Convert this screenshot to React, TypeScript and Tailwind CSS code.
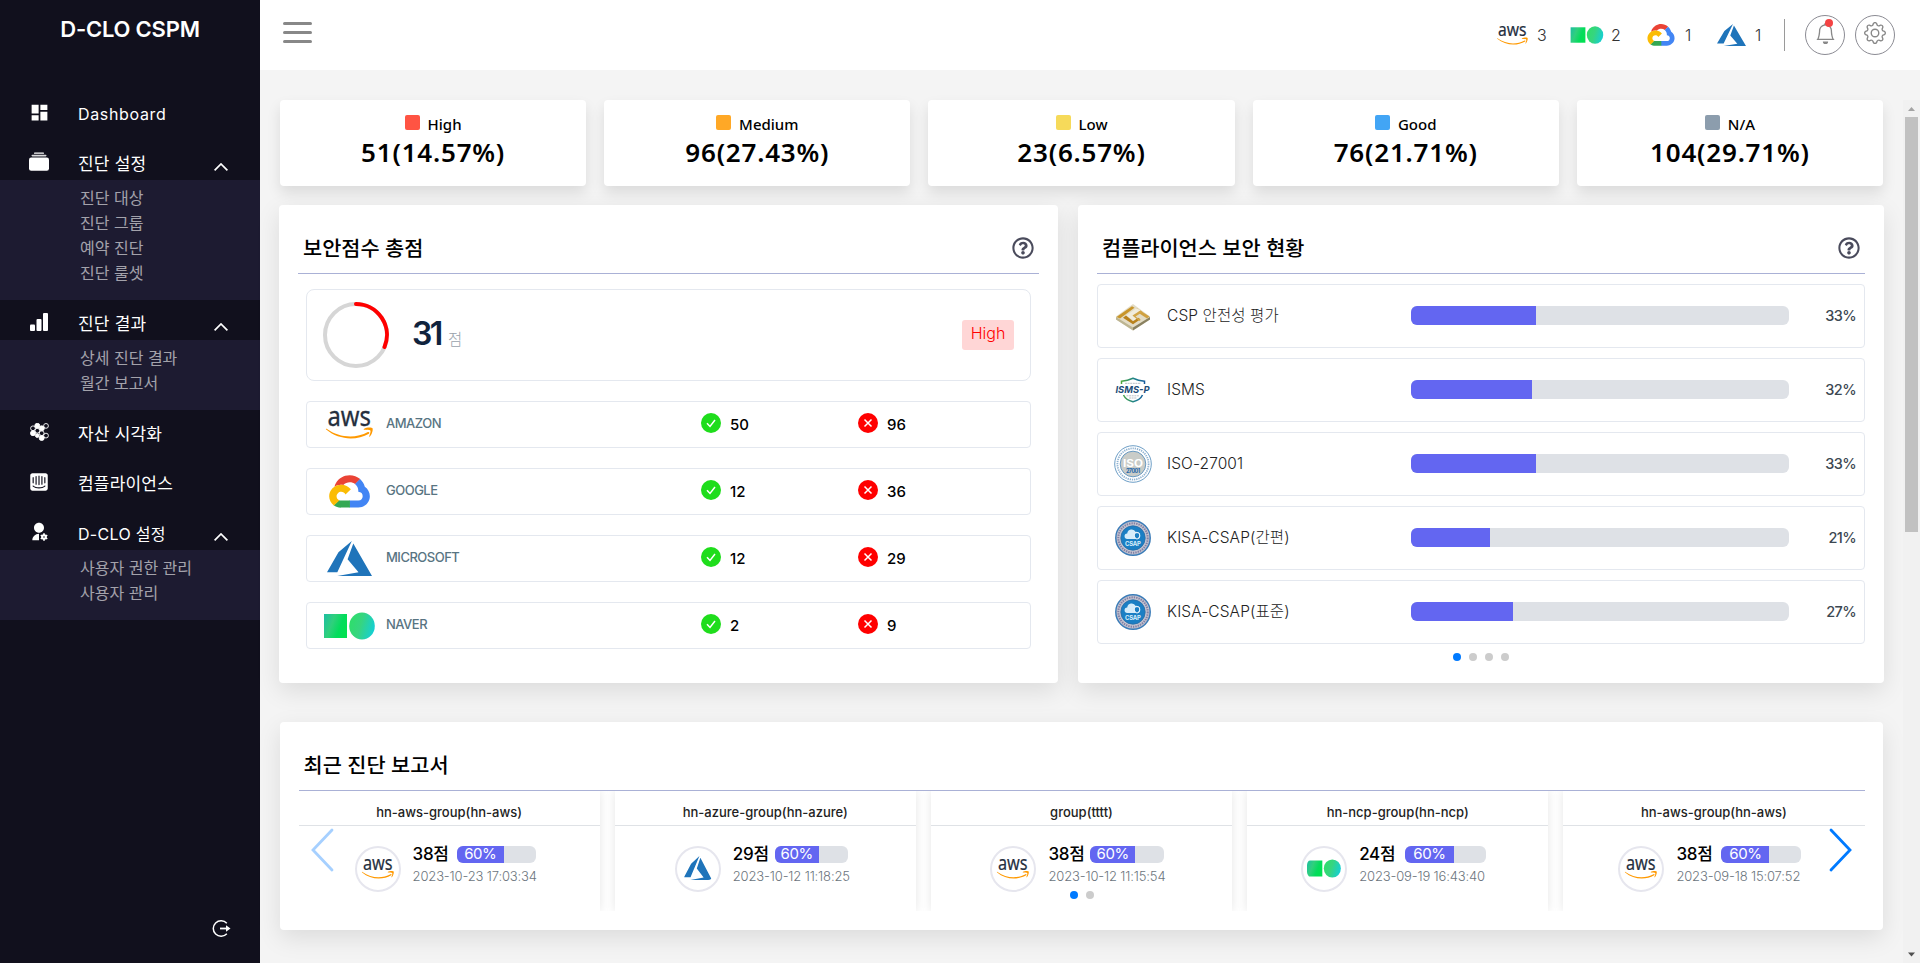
import React from "react";
import { MdDashboard } from "react-icons/md";
import { FaIntercom, FaRegQuestionCircle } from "react-icons/fa";
import { RiUserSettingsFill } from "react-icons/ri";
import { BsBell, BsGear } from "react-icons/bs";

type LogoProps = { className?: string };

function AwsLogo({ className }: LogoProps) {
  return (
    <svg viewBox="0 0 47 29" className={`overflow-visible ${className}`} aria-label="aws">
      <text x="1.500" y="15.800" fontFamily="'Noto Sans', 'Open Sans', sans-serif" fontWeight="400" fontSize="28" textLength="43.500" lengthAdjust="spacingAndGlyphs" fill="#252f3e" stroke="#252f3e" strokeWidth="0.300">
        aws
      </text>
      <path d="M0.600 18.800c13 9.500 29.500 9.800 41.300 3.300 1.200-.6 2 .8 1 1.600C30.500 30.900 12.500 30.100.2 19.600c-.7-.6-.2-1.200.4-.8z" fill="#ff9900" />
      <path d="M37.800 18.900c2.600-1.600 7.900-1.700 8.700-.6.7 1.200-.3 6-2.600 8.300-.5.4-.9.100-.7-.4.8-2 1.700-4.900 1.200-5.700-.6-.8-4-.6-6.100-.8-.6-.1-.8-.5-.5-.8z" fill="#ff9900" />
    </svg>
  );
}

function GoogleCloudLogo({ className }: LogoProps) {
  return (
    <svg viewBox="5 14 118 95" className={className} aria-label="google cloud">
      <path fill="#ea4335" d="M80.6 40.3h.4l-.2-.2 14-14v-.3c-11.800-10.400-28.100-14-43.200-9.500C36.500 20.800 24.900 32.800 20.700 48c.2-.1.5-.2.8-.2 5.200-3.400 11.400-5.400 17.900-5.400 2.200 0 4.300.2 6.400.6.1-.1.2-.1.3-.1 9-9.900 24.200-11.100 34.600-2.600h-.1z" />
      <path fill="#4285f4" d="M108.100 47.800c-2.300-8.500-7.100-16.200-13.800-22.100L80 39.900c6 4.900 9.500 12.300 9.300 20v2.500c16.900 0 16.900 25.200 0 25.200H63.900v20h-.1l.1.2h25.400c14.600.1 27.500-9.300 31.800-23.100 4.300-13.800-1-28.800-13-36.900z" />
      <path fill="#34a853" d="M39 107.900h26.300V87.700H39c-1.900 0-3.700-.4-5.400-1.100l-15.200 14.600v.2c6 4.300 13.200 6.600 20.700 6.600z" />
      <path fill="#fbbc05" d="M40.200 41.900c-14.900.1-28.100 9.300-32.900 22.800-4.800 13.600 0 28.500 11.800 37.300l15.600-14.900c-8.600-3.700-10.600-14.500-4-20.800 6.600-6.400 17.800-4.400 21.700 3.800L68 55.200C61.400 46.900 51.100 42 40.200 42.100z" />
    </svg>
  );
}

function AzureLogo({ className }: LogoProps) {
  return (
    <svg viewBox="0 2.700 24 18.600" className={className} preserveAspectRatio="none" aria-label="azure">
      <path fill="#1f74ba" d="M5.483 21.300H24L14.025 4.013l-3.038 8.347 5.836 6.938L5.483 21.300zM13.230 2.700L6.105 8.677 0 19.253h5.505v.014L13.230 2.700z" />
    </svg>
  );
}

function NaverLogo({ className }: LogoProps) {
  return (
    <svg viewBox="0 0 51 28" className={className} aria-label="naver cloud">
      <defs>
        <linearGradient id="ncpSquare" x1="0" y1="0.1" x2="1" y2="0.5">
          <stop offset="0" stopColor="#1fbfa0" />
          <stop offset="0.4" stopColor="#2fd07c" />
          <stop offset="0.75" stopColor="#03dc5c" />
          <stop offset="1" stopColor="#02e052" />
        </linearGradient>
        <linearGradient id="ncpCircle" x1="0" y1="0.3" x2="1" y2="0.600">
          <stop offset="0" stopColor="#2ede69" />
          <stop offset="0.450" stopColor="#36d580" />
          <stop offset="1" stopColor="#14cfd6" />
        </linearGradient>
      </defs>
      <rect x="0" y="2" width="23" height="24" fill="url(#ncpSquare)" />
      <ellipse cx="38" cy="14" rx="12.800" ry="13.600" fill="url(#ncpCircle)" />
    </svg>
  );
}

function CspBadge() {
  return (
    <svg viewBox="0 0 36 28" className="mt-px h-[28px] w-[36px]">
      <path d="M1 13.500 18 1l17 12.500v3L18 27.500 1 16.500z" fill="#e3dcc6" />
      <path d="M1 14 18 24.500v3L1 16.500z" fill="#bdb592" />
      <path d="M18 24.500 35 14v2.500L18 27.500z" fill="#8a8160" />
      <path d="M1.500 14 17 3.200l2.500 1.600L5 15.600z" fill="#c8952a" />
      <path d="M34.500 13.500 22 5.500l-2.500 1.800L32 15.500z" fill="#cfa040" />
      <path d="M21 5.500 11 12.500l8 5.200 2.800-2-4.300-3 8-5.200-1.800-1.200" fill="#f1ecdc" />
      <path d="M11 12.500 8 14.700l10 6.500 7.500-5-2.300-1.500-5.200 3.500z" fill="#b9821c" />
      <path d="M17.500 12.500l8-5 2 1.400-7 4.600 5.200 3.400-1.500 1z" fill="#d3a545" />
    </svg>
  );
}

function IsmsBadge() {
  return (
    <svg viewBox="0 0 36 26" className="h-[26px] w-[36px] overflow-visible">
      <defs>
        <linearGradient id="ismsShield" x1="0" x2="1">
          <stop offset="0" stopColor="#4da83b" />
          <stop offset="0.600" stopColor="#1c7f8f" />
          <stop offset="1" stopColor="#155a9c" />
        </linearGradient>
      </defs>
      <path d="M6.500 7V4.200C11 3.800 14.500 2.800 18 1.200c3.500 1.600 7 2.600 11.500 3V7M8.500 18c1.500 3.300 5 5.700 9.500 6.800 4.500-1.100 8-3.500 9.500-6.800" fill="none" stroke="url(#ismsShield)" strokeWidth="1.500" />
      <path d="M10 6.300h16M11.500 18.800h13M14 21h8" stroke="#b9c0c6" strokeWidth="1" strokeDasharray="2 0.600" />
      <text x="0.500" y="16" fontFamily="Inter, sans-serif" fontSize="9.500" fontWeight="700" fontStyle="italic" fill="#1f4e79" textLength="34" lengthAdjust="spacingAndGlyphs">
        ISMS-P
      </text>
    </svg>
  );
}

function IsoBadge() {
  return (
    <svg viewBox="0 0 38 38" className="size-[38px]">
      <circle cx="19" cy="19" r="18.300" fill="#fff" stroke="#5c93c0" strokeWidth="0.900" />
      <circle cx="19" cy="19" r="15.600" fill="none" stroke="#5f92bd" strokeWidth="1.800" strokeDasharray="1.300 0.900" opacity="0.700" />
      <circle cx="19" cy="19" r="12.800" fill="#c9ccc8" stroke="#5c93c0" strokeWidth="0.900" />
      <text x="19" y="21.500" textAnchor="middle" fontFamily="Inter, sans-serif" fontSize="10" fontWeight="700" fill="#fff" textLength="20" lengthAdjust="spacingAndGlyphs">
        ISO
      </text>
      <text x="19" y="28.300" textAnchor="middle" fontFamily="Inter, sans-serif" fontSize="5.500" fontWeight="700" fill="#1f66a8" textLength="14">
        27001
      </text>
    </svg>
  );
}

function CsapBadge() {
  return (
    <svg viewBox="0 0 36 36" className="size-[36px]">
      <circle cx="18" cy="18" r="17.200" fill="#c5c5d0" stroke="#3b7cb8" strokeWidth="1.500" />
      <circle cx="18" cy="18" r="14.700" fill="none" stroke="#55528a" strokeWidth="2" strokeDasharray="1.400 1" opacity="0.600" />
      <circle cx="18" cy="18" r="12.200" fill="#1b7fc4" stroke="#2a6ca6" strokeWidth="0.800" />
      <path d="M12.500 19a2.800 2.800 0 0 1-.3-5.600 4.500 4.500 0 0 1 8.500-1.500 4 4 0 0 1 3 7.100z" fill="#d5ecfa" />
      <path d="M22 12.500l2.600 1v2.300c0 1.600-1.200 2.700-2.600 3.300-1.400-.6-2.600-1.700-2.600-3.300v-2.300z" fill="#1b7fc4" stroke="#fff" strokeWidth="0.900" />
      <text x="18" y="25.500" textAnchor="middle" fontFamily="Inter, sans-serif" fontSize="6" fontWeight="700" fill="#d9eefb" textLength="16">
        CSAP
      </text>
    </svg>
  );
}

function AlbumsIcon() {
  return (
    <svg viewBox="0 0 20 19" className="h-[19px] w-[20px]" fill="currentColor">
      <rect x="5" y="0.500" width="10" height="1.300" rx="0.600" />
      <rect x="2.500" y="2.800" width="15" height="1.600" rx="0.800" opacity="0.850" />
      <rect x="0" y="5.500" width="20" height="13.300" rx="2.200" />
    </svg>
  );
}

function BarsIcon() {
  return (
    <svg viewBox="0 0 18 18" className="size-[18px]" fill="currentColor">
      <rect x="0" y="11.500" width="5" height="6.500" rx="1" />
      <rect x="6.500" y="6" width="5" height="12" rx="1" />
      <rect x="13" y="0" width="5" height="18" rx="1" />
    </svg>
  );
}

function ClusterIcon() {
  return (
    <svg viewBox="0 0 19 18" className="h-[18px] w-[19px]" fill="currentColor" stroke="currentColor" strokeWidth="0.900">
      <circle cx="7.300" cy="2.800" r="2.500" />
      <circle cx="11.800" cy="5.300" r="2.500" />
      <circle cx="3" cy="10.200" r="2.500" />
      <circle cx="7.300" cy="12.600" r="1.900" />
      <circle cx="11.700" cy="15" r="2.500" />
      <g fill="none">
        <circle cx="3" cy="5.300" r="2.400" />
        <circle cx="16" cy="2.900" r="2.400" />
        <circle cx="7.300" cy="7.700" r="2.400" />
        <circle cx="11.700" cy="10.200" r="2.400" />
        <circle cx="16" cy="12.600" r="2.400" />
      </g>
    </svg>
  );
}

function ChevronUp() {
  return (
    <svg viewBox="0 0 14 8" className="mt-[14px] mr-[32px] ml-auto h-[8px] w-[14px]" fill="none" stroke="#fff" strokeWidth="1.700">
      <path d="M0.600 7.400 7 1l6.400 6.400" />
    </svg>
  );
}

type MenuItem = {
  label: string;
  icon: React.ReactNode;
  labelClass: string;
  children?: string[];
};

const menu: MenuItem[] = [
  { label: "Dashboard", icon: <MdDashboard size={21} />, labelClass: "text-[16px] tracking-[0.650px]" },
  { label: "진단 설정", icon: <AlbumsIcon />, labelClass: "text-[17px] tracking-[0.200px]", children: ["진단 대상", "진단 그룹", "예약 진단", "진단 룰셋"] },
  { label: "진단 결과", icon: <BarsIcon />, labelClass: "text-[17px] tracking-[0.200px]", children: ["상세 진단 결과", "월간 보고서"] },
  { label: "자산 시각화", icon: <ClusterIcon />, labelClass: "text-[17px] tracking-[0.200px]" },
  { label: "컴플라이언스", icon: <FaIntercom size={20} />, labelClass: "text-[17px] tracking-[0.200px]" },
  { label: "D-CLO 설정", icon: <RiUserSettingsFill size={20} />, labelClass: "text-[16px] tracking-[0.300px]", children: ["사용자 권한 관리", "사용자 관리"] },
];

function Sidebar() {
  return (
    <aside className="flex h-full w-[260px] shrink-0 flex-col bg-[#11101d] text-white">
      <h1 className="h-[90px] pt-[13px] text-center text-[22px] leading-[32px] font-semibold tracking-[-0.200px]">D-CLO CSPM</h1>
      <nav className="flex flex-col">
        {menu.map((item) => (
          <div key={item.label}>
            <div className={item.children ? "flex h-[40px] items-center" : "flex h-[50px] items-center pb-[2px]"}>
              <span className={item.children ? "flex w-[78px] items-center justify-center pt-[3px]" : "flex w-[78px] items-center justify-center pb-[4px]"}>{item.icon}</span>
              <span className={`leading-[24px] ${item.children ? "pt-[8px]" : ""} ${item.labelClass}`}>{item.label}</span>
              {item.children && <ChevronUp />}
            </div>
            {item.children && (
              <ul className="bg-[#1d1b31] pt-[6px] pb-[14px] pl-[80px] text-[16px] leading-[25px] text-white/60">
                {item.children.map((child) => (
                  <li key={child}>{child}</li>
                ))}
              </ul>
            )}
          </div>
        ))}
      </nav>
      <button className="mt-auto mb-[25px] ml-[212px] w-fit" aria-label="logout">
        <svg viewBox="0 0 19 19" className="size-[19px]" fill="none" stroke="#fff" strokeWidth="1.500">
          <path d="M14.800 4.200A7.800 7.800 0 1 0 14.800 14.800" />
          <path d="M8 9.500h7" strokeWidth="1.800" />
          <path d="M14 6.300l4.500 3.200-4.500 3.200z" fill="#fff" stroke="none" />
        </svg>
      </button>
    </aside>
  );
}

function Header() {
  return (
    <header className="flex h-[70px] shrink-0 items-center bg-white pr-[25px] pl-[23px] text-[16px] font-light text-[#333]">
      <button className="mb-[5px] flex flex-col gap-[6px]" aria-label="menu">
        <span className="h-[3px] w-[29px] rounded-full bg-[#888]" />
        <span className="h-[3px] w-[29px] rounded-full bg-[#888]" />
        <span className="h-[3px] w-[29px] rounded-full bg-[#888]" />
      </button>
      <div className="ml-auto flex items-center">
        <div className="flex w-[73px] items-center gap-[9px]">
          <AwsLogo className="h-[19px] w-[31px]" />
          <span className="pb-px">3</span>
        </div>
        <div className="flex w-[77px] items-center gap-[7px]">
          <NaverLogo className="h-[18px] w-[34px]" />
          <span className="pb-px">2</span>
        </div>
        <div className="flex w-[70px] items-center gap-[10px]">
          <GoogleCloudLogo className="h-[22px] w-[28px]" />
          <span className="pb-px">1</span>
        </div>
        <div className="flex w-[67px] items-center gap-[9px]">
          <AzureLogo className="h-[22px] w-[29px]" />
          <span className="pb-px">1</span>
        </div>
        <div className="h-[32px] w-px bg-[#9a9a9a]" />
        <button className="relative ml-[20px] flex size-[40px] items-center justify-center rounded-full border border-[#8b8b93] pb-[3px] text-[#888]" aria-label="alerts">
          <BsBell size={21} />
          <span className="absolute top-[3px] left-[19px] size-[8px] rounded-full bg-[#f44343]" />
        </button>
        <button className="ml-[10px] flex size-[40px] items-center justify-center rounded-full border border-[#8b8b93] pb-[4px] text-[#888]" aria-label="settings">
          <BsGear size={22} />
        </button>
      </div>
    </header>
  );
}

const severities = [
  { label: "High", value: "51(14.57%)", color: "bg-[#ff5443]" },
  { label: "Medium", value: "96(27.43%)", color: "bg-[#ffa826]" },
  { label: "Low", value: "23(6.57%)", color: "bg-[#f6da5a]" },
  { label: "Good", value: "76(21.71%)", color: "bg-[#42a5f5]" },
  { label: "N/A", value: "104(29.71%)", color: "bg-[#8c9dad]" },
];

function SeverityCards() {
  return (
    <section className="grid grid-cols-5 gap-[18px] font-['Noto_Sans','Open_Sans',sans-serif] text-black">
      {severities.map((s) => (
        <div key={s.label} className="flex h-[86px] flex-col items-center rounded-[4px] bg-white pt-[12px] shadow-[0_7px_14px_rgba(0,0,0,0.1)]">
          <div className="flex h-[24px] items-center gap-[8px] text-[15px] leading-[24px] font-medium">
            <span className={`mb-[3px] size-[15px] rounded-[2px] ${s.color}`} />
            {s.label}
          </div>
          <div className="text-[26px] leading-[32px] font-semibold tracking-[0.800px]">{s.value}</div>
        </div>
      ))}
    </section>
  );
}

function PanelTitle({ title, help }: { title: string; help?: boolean }) {
  return (
    <div className="flex h-[52px] items-center justify-between border-b border-[#aab1d6] px-[5px]">
      <h2 className="pt-[2px] text-[20.800px] leading-[30px] font-medium text-black">{title}</h2>
      {help && <FaRegQuestionCircle size={22} className="text-[#4a4b5c]" />}
    </div>
  );
}

const providers = [
  { name: "AMAZON", pass: 50, fail: 96, logo: <AwsLogo className="h-[29px] w-[47px]" /> },
  { name: "GOOGLE", pass: 12, fail: 36, logo: <GoogleCloudLogo className="h-[33px] w-[41px]" /> },
  { name: "MICROSOFT", pass: 12, fail: 29, logo: <AzureLogo className="h-[35px] w-[45px]" /> },
  { name: "NAVER", pass: 2, fail: 9, logo: <NaverLogo className="h-[28px] w-[51px]" /> },
];

function ScorePanel() {
  return (
    <section className="h-[478px] w-[779px] rounded-[4px] bg-white px-[19px] pt-[17px] shadow-[0_8px_24px_rgba(0,0,0,0.1)]">
      <PanelTitle title="보안점수 총점" help />
      <div className="mt-[15px] ml-[8px] flex h-[92px] w-[725px] items-center rounded-[8px] border border-[#e4e8ef] pr-[16px] pl-[16px]">
        <svg viewBox="0 0 66 66" className="size-[66px]" fill="none" strokeWidth="4">
          <circle cx="33" cy="33" r="31" stroke="#d6d6d6" />
          <path d="M33 2A31 31 0 0 1 61.500 45" stroke="#f00" strokeLinecap="round" />
        </svg>
        <p className="ml-[23px] flex items-baseline gap-[7px] pt-[3px] text-[32px] leading-[40px] font-semibold tracking-[-2.500px] text-[#10233d]">
          31
          <span className="text-[15.500px] font-light tracking-normal text-[#98a2ab]">점</span>
        </p>
        <span className="ml-auto h-[30px] w-[52px] rounded-[3px] bg-[#ffd6d6] text-center text-[16px] leading-[26px] font-light text-[#f00]">High</span>
      </div>
      <ul className="mt-[20px] ml-[8px] flex w-[725px] flex-col gap-[20px]">
        {providers.map((p) => (
          <li key={p.name} className="flex h-[47px] items-center rounded-[4px] border border-[#e4e8ef]">
            <span className="ml-[12px] flex w-[60px] justify-center">{p.logo}</span>
            <span className="ml-[7px] w-[308px] pb-[1px] text-[13px] font-medium tracking-[-0.500px] text-[#587482]">{p.name}</span>
            <span className="flex w-[157px] items-center gap-[9px] pl-[7px] text-[15px] font-medium text-black">
              <svg viewBox="0 0 20 20" className="mb-[4px] size-[20px]">
                <circle cx="10" cy="10" r="10" fill="#1fdd1c" />
                <path d="M6 10.200l3 3.200 5-6.400" fill="none" stroke="#fff" strokeWidth="1.500" />
              </svg>
              <span className="pt-[2px]">{p.pass}</span>
            </span>
            <span className="flex items-center gap-[9px] pl-[7px] text-[15px] font-medium text-black">
              <svg viewBox="0 0 20 20" className="mb-[4px] size-[20px]">
                <circle cx="10" cy="10" r="10" fill="#f00" />
                <path d="M6.500 6.500l7 7M13.500 6.500l-7 7" fill="none" stroke="#fff" strokeWidth="1.500" />
              </svg>
              <span className="pt-[2px]">{p.fail}</span>
            </span>
          </li>
        ))}
      </ul>
    </section>
  );
}

const compliances = [
  { name: "CSP 안전성 평가", percent: 33, badge: <CspBadge /> },
  { name: "ISMS", percent: 32, badge: <IsmsBadge /> },
  { name: "ISO-27001", percent: 33, badge: <IsoBadge /> },
  { name: "KISA-CSAP(간편)", percent: 21, badge: <CsapBadge /> },
  { name: "KISA-CSAP(표준)", percent: 27, badge: <CsapBadge /> },
];

function CompliancePanel() {
  return (
    <section className="h-[478px] w-[806px] rounded-[4px] bg-white px-[19px] pt-[17px] shadow-[0_8px_24px_rgba(0,0,0,0.1)]">
      <PanelTitle title="컴플라이언스 보안 현황" help />
      <ul className="mt-[10px] flex flex-col gap-[10px]">
        {compliances.map((c) => (
          <li key={c.name} className="flex h-[64px] items-center rounded-[4px] border border-[#e4e8ef] pr-[8px]">
            <span className="ml-[10px] flex w-[50px] justify-center">{c.badge}</span>
            <span className="ml-[9px] w-[244px] pb-[1px] text-[15.500px] font-light tracking-[0.100px] text-[#222]">{c.name}</span>
            <span className="mb-px h-[19px] w-[378px] overflow-hidden rounded-[6px] bg-[#dee1e6]">
              <span className="block h-full bg-[#6366f1]" style={{ width: `${c.percent}%` }} />
            </span>
            <span className="ml-auto text-[14.500px] font-medium tracking-[-0.600px] text-[#3c4852]">{c.percent}%</span>
          </li>
        ))}
      </ul>
      <div className="mt-[9px] flex justify-center gap-[8px]">
        <span className="size-[8px] rounded-full bg-[#007aff]" />
        <span className="size-[8px] rounded-full bg-[#ccc]" />
        <span className="size-[8px] rounded-full bg-[#ccc]" />
        <span className="size-[8px] rounded-full bg-[#ccc]" />
      </div>
    </section>
  );
}

const reports = [
  { group: "hn-aws-group(hn-aws)", score: 38, date: "2023-10-23 17:03:34", logo: <AwsLogo className="h-[20px] w-[32px]" />, width: "w-[123px]", bar: "w-[79px]" },
  { group: "hn-azure-group(hn-azure)", score: 29, date: "2023-10-12 11:18:25", logo: <AzureLogo className="mb-[2px] h-[24px] w-[28px] rounded-[4px]" />, width: "w-[115px]", bar: "w-[73px]" },
  { group: "group(tttt)", score: 38, date: "2023-10-12 11:15:54", logo: <AwsLogo className="h-[20px] w-[32px]" />, width: "w-[116px]", bar: "w-[74px]" },
  { group: "hn-ncp-group(hn-ncp)", score: 24, date: "2023-09-19 16:43:40", logo: <NaverLogo className="mb-px h-[19px] w-[34px] rounded-[6px]" />, width: "w-[127px]", bar: "w-[81px]" },
  { group: "hn-aws-group(hn-aws)", score: 38, date: "2023-09-18 15:07:52", logo: <AwsLogo className="h-[20px] w-[32px]" />, width: "w-[125px]", bar: "w-[80px]" },
];

function ReportsPanel() {
  return (
    <section className="mt-[39px] ml-px h-[208px] w-[1603px] rounded-[4px] bg-white px-[18.500px] pt-[17px] shadow-[0_8px_24px_rgba(0,0,0,0.1)]">
      <PanelTitle title="최근 진단 보고서" />
      <div className="relative">
        <div className="grid h-[120px] grid-cols-5 gap-[15px] overflow-hidden">
          {reports.map((r, i) => (
            <article key={i} className="bg-white shadow-[0_0_10px_rgba(0,0,0,0.1)]">
              <h3 className="h-[35px] border-b border-[#dfe2e6] pt-[11px] text-center text-[13px] leading-[20px] font-medium text-[#222]">{r.group}</h3>
              <div className="flex justify-center gap-[12px] pt-[20px] pr-[8px]">
                <span className="flex size-[46px] shrink-0 items-center justify-center rounded-full border-2 border-[#e6e6ee]">{r.logo}</span>
                <div className={`${r.width} whitespace-nowrap`}>
                  <div className="flex h-[17px] items-center justify-between">
                    <span className="text-[17px] leading-[17px] font-medium tracking-[-0.300px] text-black">{r.score}점</span>
                    <span className={`${r.bar} h-[17px] overflow-hidden rounded-[6px] bg-[#dee1e6]`}>
                      <span className="block h-full w-3/5 bg-[#6366f1] text-center text-[15px] leading-[16px] tracking-[-0.400px] text-white">60%</span>
                    </span>
                  </div>
                  <div className="mt-[4px] text-[13px] leading-[18px] font-light tracking-[-0.150px] text-[#6c757d]">{r.date}</div>
                </div>
              </div>
            </article>
          ))}
        </div>
        <svg viewBox="0 0 23 44" className="absolute top-[37px] left-[12px] h-[44px] w-[23px]" fill="none" stroke="#a6d0ff" strokeWidth="2.800" strokeLinecap="round">
          <path d="M21 2 2 22l19 20" />
        </svg>
        <svg viewBox="0 0 23 44" className="absolute top-[37px] right-[13px] h-[44px] w-[23px]" fill="none" stroke="#007aff" strokeWidth="2.800" strokeLinecap="round">
          <path d="M2 2l19 20L2 42" />
        </svg>
        <div className="absolute top-[100px] left-0 flex w-full justify-center gap-[8px]">
          <span className="size-[8px] rounded-full bg-[#007aff]" />
          <span className="size-[8px] rounded-full bg-[#ccc]" />
        </div>
      </div>
    </section>
  );
}

function Scrollbar() {
  return (
    <div className="flex h-full w-[17px] shrink-0 flex-col items-center bg-[#f1f1f1]">
      <svg viewBox="0 0 17 17" className="size-[17px]">
        <path d="M5 11h7L8.500 7z" fill="#a3a3a3" />
      </svg>
      <div className="h-[415px] w-[13px] bg-[#c1c1c1]" />
      <svg viewBox="0 0 17 17" className="mt-auto size-[17px]">
        <path d="M5 6.500h7l-3.500 4z" fill="#505050" />
      </svg>
    </div>
  );
}

export default function App() {
  return (
    <div className="flex h-[963px] w-[1920px] overflow-hidden bg-[#f4f4f4] font-['Inter','Noto_Sans_CJK_KR',sans-serif]">
      <Sidebar />
      <div className="flex min-w-0 flex-1 flex-col">
        <Header />
        <div className="mt-[30px] flex min-h-0 flex-1">
          <main className="min-w-0 flex-1 pl-[19px]">
            <div className="ml-px w-[1603px]">
              <SeverityCards />
            </div>
            <div className="mt-[19px] flex gap-[20px]">
              <ScorePanel />
              <CompliancePanel />
            </div>
            <ReportsPanel />
          </main>
          <Scrollbar />
        </div>
      </div>
    </div>
  );
}
